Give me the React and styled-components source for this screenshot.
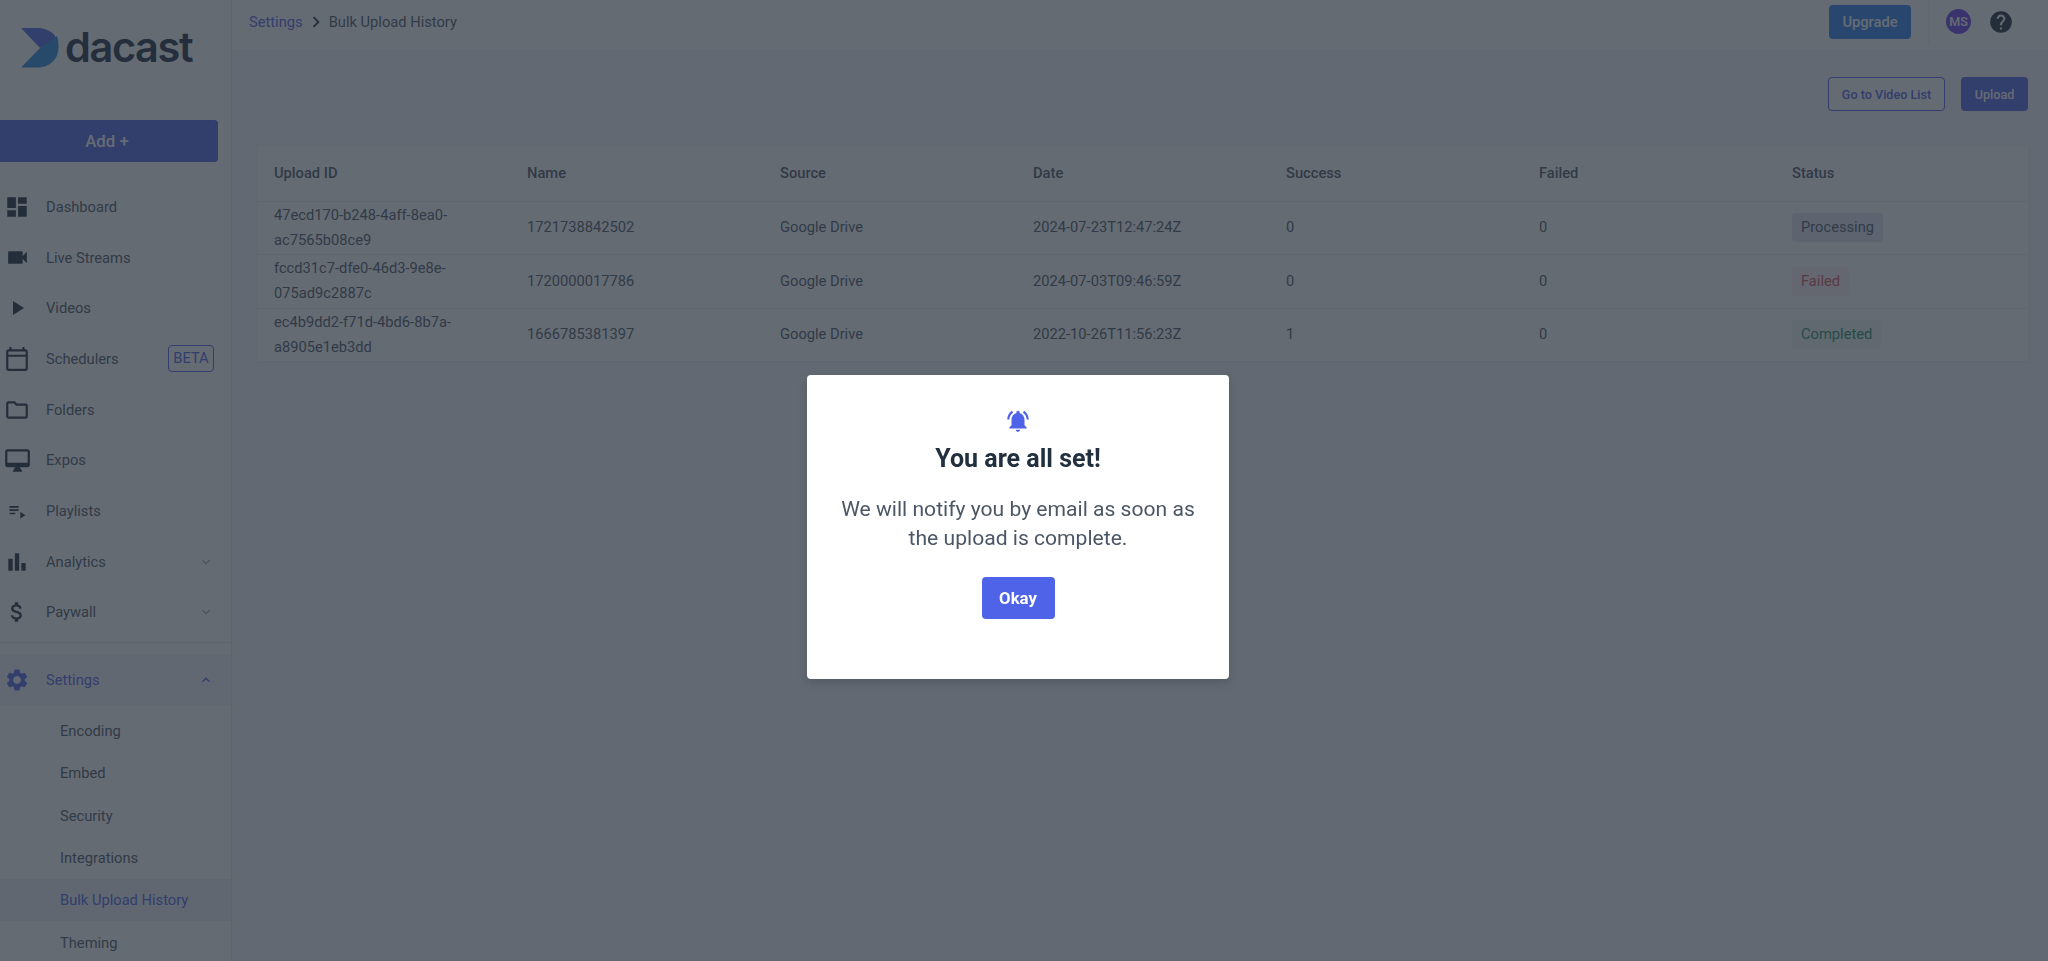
import React from 'react';
import styled, {createGlobalStyle} from 'styled-components';
import {
  MdDashboard,
  MdVideocam,
  MdPlayArrow,
  MdOutlineCalendarToday,
  MdOutlineFolder,
  MdOutlineDesktopMac,
  MdPlaylistPlay,
  MdBarChart,
  MdAttachMoney,
  MdSettings,
  MdExpandMore,
  MdExpandLess,
  MdHelp,
  MdNotificationsActive,
  MdChevronRight
} from 'react-icons/md';

const GlobalStyle = createGlobalStyle`
  html, body {
    margin: 0;
    height: 100%;
    overflow: hidden;
    font-family: Roboto, "Liberation Sans", sans-serif;
    color: #4c5766;
  }
  * {
    box-sizing: border-box;
  }
`;

const Page = styled.div`
  display: flex;
  height: 961px;
  background: #f5f7fa;
  overflow: hidden;
`;

const Sidebar = styled.aside`
  flex: 0 0 232px;
  height: 100%;
  background: #fff;
  border-right: 1px solid #e4e8ee;
  overflow: hidden;
`;

const LogoWrap = styled.div`
  display: flex;
  align-items: center;
  height: 120px;
  padding: 0 0 24px 21px;
  gap: 6px;
`;

const LogoText = styled.span`
  font-family: Inter, Roboto, sans-serif;
  font-size: 41.5px;
  font-weight: 600;
  letter-spacing: -1.4px;
  line-height: 1;
  color: #1f2f45;
`;

const AddButton = styled.button`
  display: block;
  width: 218px;
  height: 42px;
  margin: 0 0 19.5px;
  padding: 0 4px 0 0;
  border: 0;
  border-radius: 0 4px 4px 0;
  background: #4f63e8;
  color: #fff;
  font: 500 16.8px Roboto, sans-serif;
`;

const NavRow = styled.div`
  display: flex;
  align-items: center;
  height: 50.7px;
  padding-left: 4px;
  padding-right: 17px;
  font-size: 14.7px;
  color: ${props => (props.active ? '#4f63e8' : '#4c5766')};
  background: ${props => (props.active ? '#f2f4f8' : 'transparent')};
`;

const NavIcon = styled.span`
  display: flex;
  align-items: center;
  justify-content: center;
  flex: 0 0 26px;
  min-width: 0;
  font-size: ${props => props.$size || 26}px;
  color: ${props => (props.active ? '#4f63e8' : '#222f3e')};
  svg {
    flex-shrink: 0;
  }
`;

const NavLabel = styled.span`
  flex: 1;
  margin-left: 16px;
`;

const Caret = styled.span`
  display: flex;
  font-size: 16px;
  color: ${props => (props.active ? '#4f63e8' : '#aab2bd')};
`;

const Beta = styled.span`
  height: 27px;
  width: 46px;
  border: 1px solid #4f63e8;
  border-radius: 4px;
  color: #4f63e8;
  font-size: 14.7px;
  line-height: 25px;
  text-align: center;
`;

const Divider = styled.div`
  height: 1px;
  margin-top: 4px;
  margin-bottom: 12px;
  background: #e4e8ee;
`;

const SubList = styled.div`
  padding-top: 4.5px;
`;

const SubRow = styled.div`
  display: flex;
  align-items: center;
  height: 42.3px;
  padding-left: 60px;
  font-size: 14.7px;
  color: ${props => (props.active ? '#4f63e8' : '#4c5766')};
  background: ${props => (props.active ? '#eef0f6' : 'transparent')};
`;

const Main = styled.main`
  flex: 1;
  min-width: 0;
`;

const Header = styled.header`
  display: flex;
  align-items: center;
  height: 51px;
  padding: 0 31px 7px 17px;
  background: #fff;
  border-bottom: 1px solid #e9edf2;
`;

const Crumbs = styled.nav`
  flex: 1;
  display: flex;
  align-items: center;
  font-size: 14.7px;
  color: #4c5766;
`;

const CrumbLink = styled.span`
  color: #4f63e8;
`;

const CrumbSep = styled.span`
  display: flex;
  margin: 0 2px 0 2px;
  font-size: 22px;
  color: #222f3e;
`;

const Button = styled.button`
  height: 34px;
  border: ${props => (props.$outline ? '1px solid #4f63e8' : '0')};
  border-radius: 4px;
  background: ${props => (props.$outline ? '#fff' : props.$bg || '#4f63e8')};
  color: ${props => (props.$outline ? '#4f63e8' : '#fff')};
  font: 500 ${props => props.$size || 12.6}px Roboto, sans-serif;
  width: ${props => props.$width}px;
  padding: 0;
`;

const HeaderSep = styled.div`
  width: 1px;
  height: 44px;
  margin: 0 17px;
  background: #edf0f4;
`;

const Avatar = styled.span`
  display: flex;
  align-items: center;
  justify-content: center;
  width: 25px;
  height: 25px;
  border-radius: 50%;
  background: #6a40ee;
  color: #fff;
  font-size: 12.6px;
  font-weight: 500;
`;

const Help = styled.span`
  display: flex;
  margin-left: 17px;
  margin-right: 3px;
  font-size: 26px;
  color: #222f3e;
`;

const Actions = styled.div`
  display: flex;
  justify-content: flex-end;
  gap: 16px;
  padding: 26px 20px 35px 0;
`;

const Card = styled.section`
  margin: 0 20px 0 25px;
  background: #fff;
  box-shadow: 0 1px 3px rgba(34, 47, 62, 0.06);
`;

const Table = styled.table`
  width: 100%;
  table-layout: fixed;
  border-collapse: collapse;
  font-size: 14.7px;
`;

const Th = styled.th`
  height: 55px;
  padding: 0 17px;
  text-align: left;
  font-weight: 500;
  color: #4c5766;
  border-bottom: 1px solid #e9edf2;
`;

const Td = styled.td`
  height: 53.5px;
  padding: 1px 17px;
  line-height: 25px;
  color: #4c5766;
  border-bottom: 1px solid #e9edf2;
`;

const Tag = styled.span`
  display: inline-block;
  height: 29px;
  padding: 0 9px;
  border-radius: 3px;
  line-height: 29px;
  color: ${props => props.$color};
  background: ${props => props.$bg};
`;

const Overlay = styled.div`
  position: fixed;
  inset: 0;
  display: flex;
  align-items: flex-start;
  justify-content: center;
  padding-top: 375px;
  padding-right: 12px;
  background: rgba(38, 46, 58, 0.71);
`;

const Modal = styled.div`
  display: flex;
  flex-direction: column;
  align-items: center;
  width: 422px;
  height: 304px;
  padding-top: 33px;
  border-radius: 4px;
  background: #fff;
  box-shadow: 0 4px 8px rgba(34, 47, 62, 0.25);
`;

const Bell = styled.span`
  display: flex;
  font-size: 26px;
  color: #4f63e8;
`;

const ModalTitle = styled.h2`
  margin: 9px 0 0;
  font-size: 25px;
  line-height: 32px;
  font-weight: 700;
  color: #222f3e;
`;

const ModalText = styled.p`
  width: 362px;
  margin: 18.5px 0 0;
  font-size: 21.1px;
  line-height: 29.5px;
  text-align: center;
  color: #4c5766;
`;

const OkayButton = styled.button`
  width: 73px;
  height: 42px;
  margin-top: 24px;
  border: 0;
  border-radius: 4px;
  background: #4f63e8;
  color: #fff;
  font: 700 16.8px Roboto, sans-serif;
`;

const NAV = [
  {label: 'Dashboard', icon: MdDashboard},
  {label: 'Live Streams', icon: MdVideocam, size: 25},
  {label: 'Videos', icon: MdPlayArrow, size: 24},
  {label: 'Schedulers', icon: MdOutlineCalendarToday, size: 26, beta: true},
  {label: 'Folders', icon: MdOutlineFolder},
  {label: 'Expos', icon: MdOutlineDesktopMac, size: 27},
  {label: 'Playlists', icon: MdPlaylistPlay, size: 20},
  {label: 'Analytics', icon: MdBarChart, caret: true},
  {label: 'Paywall', icon: MdAttachMoney, caret: true}
];

const SUB_NAV = ['Encoding', 'Embed', 'Security', 'Integrations', 'Bulk Upload History', 'Theming'];

const COLUMNS = ['Upload ID', 'Name', 'Source', 'Date', 'Success', 'Failed', 'Status'];

const ROWS = [
  {
    id: '47ecd170-b248-4aff-8ea0-ac7565b08ce9',
    name: '1721738842502',
    date: '2024-07-23T12:47:24Z',
    success: 0,
    status: 'Processing',
    color: '#4c5766',
    bg: '#e4e8f4'
  },
  {
    id: 'fccd31c7-dfe0-46d3-9e8e-075ad9c2887c',
    name: '1720000017786',
    date: '2024-07-03T09:46:59Z',
    success: 0,
    status: 'Failed',
    color: '#d9535f',
    bg: '#fbeff0'
  },
  {
    id: 'ec4b9dd2-f71d-4bd6-8b7a-a8905e1eb3dd',
    name: '1666785381397',
    date: '2022-10-26T11:56:23Z',
    success: 1,
    status: 'Completed',
    color: '#2a8f68',
    bg: '#edf8f3'
  }
];

const Logo = () => (
  <svg width="38" height="40" viewBox="0 0 38 40">
    <path d="M0 0H16C28 0 35 7 35 11L19 20Z" fill="#4f63e8" />
    <path d="M36 8C37 11 37.5 14 37.5 19C37.5 32 28 39.5 16 39.5H0L19 20Z" fill="#2f8fe0" />
  </svg>
);

const App = () => (
  <Page>
    <GlobalStyle />
    <Sidebar>
      <LogoWrap>
        <Logo />
        <LogoText>dacast</LogoText>
      </LogoWrap>
      <AddButton>Add +</AddButton>
      {NAV.map(({label, icon: Icon, size, beta, caret}) => (
        <NavRow key={label}>
          <NavIcon $size={size}>
            <Icon />
          </NavIcon>
          <NavLabel>{label}</NavLabel>
          {beta && <Beta>BETA</Beta>}
          {caret && (
            <Caret>
              <MdExpandMore />
            </Caret>
          )}
        </NavRow>
      ))}
      <Divider />
      <NavRow active>
        <NavIcon active>
          <MdSettings />
        </NavIcon>
        <NavLabel>Settings</NavLabel>
        <Caret active>
          <MdExpandLess />
        </Caret>
      </NavRow>
      <SubList>
        {SUB_NAV.map(label => (
          <SubRow key={label} active={label === 'Bulk Upload History'}>
            {label}
          </SubRow>
        ))}
      </SubList>
    </Sidebar>
    <Main>
      <Header>
        <Crumbs>
          <CrumbLink>Settings</CrumbLink>
          <CrumbSep>
            <MdChevronRight />
          </CrumbSep>
          Bulk Upload History
        </Crumbs>
        <Button $bg="#2f80ee" $size={14.7} $width={82}>
          Upgrade
        </Button>
        <HeaderSep />
        <Avatar>MS</Avatar>
        <Help>
          <MdHelp />
        </Help>
      </Header>
      <Actions>
        <Button $outline $width={117}>
          Go to Video List
        </Button>
        <Button $width={67}>Upload</Button>
      </Actions>
      <Card>
        <Table>
          <thead>
            <tr>
              {COLUMNS.map(col => (
                <Th key={col}>{col}</Th>
              ))}
            </tr>
          </thead>
          <tbody>
            {ROWS.map(row => (
              <tr key={row.id}>
                <Td>{row.id}</Td>
                <Td>{row.name}</Td>
                <Td>Google Drive</Td>
                <Td>{row.date}</Td>
                <Td>{row.success}</Td>
                <Td>0</Td>
                <Td>
                  <Tag $color={row.color} $bg={row.bg}>
                    {row.status}
                  </Tag>
                </Td>
              </tr>
            ))}
          </tbody>
        </Table>
      </Card>
    </Main>
    <Overlay>
      <Modal>
        <Bell>
          <MdNotificationsActive />
        </Bell>
        <ModalTitle>You are all set!</ModalTitle>
        <ModalText>We will notify you by email as soon as the upload is complete.</ModalText>
        <OkayButton>Okay</OkayButton>
      </Modal>
    </Overlay>
  </Page>
);

export default App;
